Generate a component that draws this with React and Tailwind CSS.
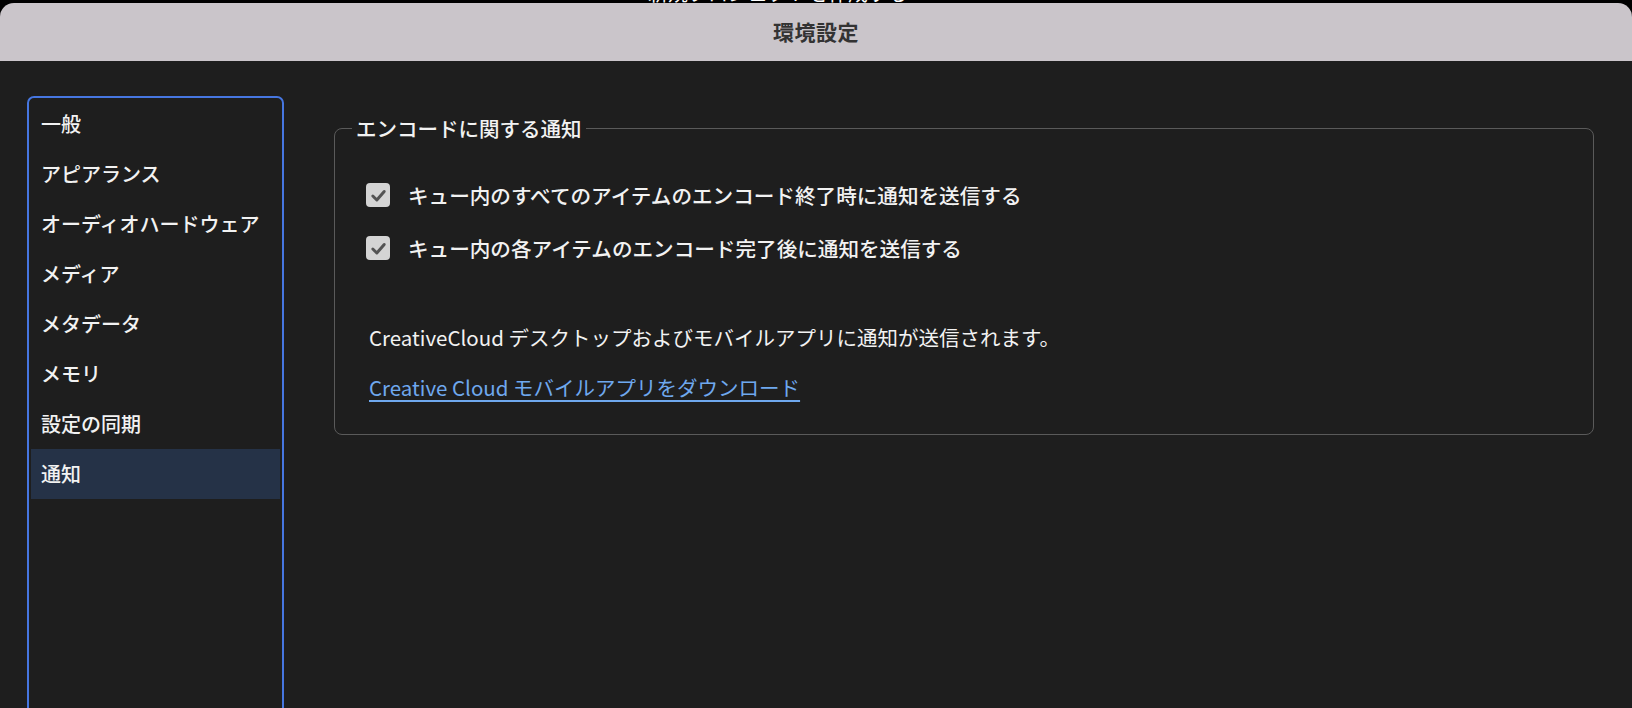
import React from "react";

const FONT = {
  fontFamily: '"Noto Sans CJK JP", "Noto Sans", sans-serif',
};

const SECTIONS = [
  "一般",
  "アピアランス",
  "オーディオハードウェア",
  "メディア",
  "メタデータ",
  "メモリ",
  "設定の同期",
  "通知",
];

function Checkbox() {
  return (
    <div className="w-[24px] h-[24px] rounded-[4px] bg-[#d4d4d4] flex items-center justify-center shrink-0">
      <svg width="19" height="19" viewBox="0 0 16 16" fill="none">
        <path
          d="M3.2 8.4 L6.6 11.8 L12.8 4.6"
          stroke="#535353"
          strokeWidth="2.5"
          strokeLinecap="round"
          strokeLinejoin="round"
        />
      </svg>
    </div>
  );
}

export default function App() {
  const selected = "通知";

  return (
    <div
      className="w-[1632px] h-[708px] bg-black overflow-hidden flex flex-col"
      style={FONT}
    >
      {/* window behind, only its title shows */}
      <div className="h-[3px] overflow-hidden pl-[648px] shrink-0">
        <div className="text-white text-[20px] leading-[20px] -mt-[17px]">
          新規プロジェクトを作成する
        </div>
      </div>

      {/* title bar */}
      <div className="h-[58px] shrink-0 bg-[#cac5ca] rounded-t-[14px] flex items-center justify-center">
        <span className="text-[21px] font-semibold text-[#333] tracking-[0.5px]">
          環境設定
        </span>
      </div>

      {/* body */}
      <div className="flex-1 bg-[#1e1e1e] flex pl-[27px] pr-[38px] pt-[35px] gap-[50px]">
        <div className="w-[257px] h-[640px] shrink-0 border-2 border-[#4676e0] rounded-[7px] pt-[1px] px-[2px]">
          {SECTIONS.map((s) => (
            <div
              key={s}
              className={
                "h-[50px] flex items-center pl-[10px] text-[20px] font-medium text-[#f2f2f2] " +
                (s === selected ? "bg-[#253247]" : "")
              }
            >
              {s}
            </div>
          ))}
        </div>

        <fieldset className="flex-1 self-start mt-[18px] border border-[#5a5a5a] rounded-[8px] px-[31px] pb-[32px]">
          <legend className="ml-[-14px] px-[4px] text-[20.5px] font-medium leading-[28px] text-[#f2f2f2]">
            エンコードに関する通知
          </legend>

          <div className="pt-[38px]">
            <div className="h-[30px] flex items-center gap-[18px]">
              <Checkbox />
              <span className="text-[20.6px] font-medium text-[#f2f2f2]">
                キュー内のすべてのアイテムのエンコード終了時に通知を送信する
              </span>
            </div>
            <div className="h-[30px] mt-[23px] flex items-center gap-[18px]">
              <Checkbox />
              <span className="text-[20.6px] font-medium text-[#f2f2f2]">
                キュー内の各アイテムのエンコード完了後に通知を送信する
              </span>
            </div>

            <div className="mt-[59px] h-[30px] leading-[30px] pl-[3px] text-[20.5px] text-[#f2f2f2]">
              CreativeCloud デスクトップおよびモバイルアプリに通知が送信されます。
            </div>
            <div className="mt-[20px] h-[30px] leading-[30px] pl-[3px]">
              <a
                href="#"
                className="text-[20.5px] text-[#6fa8ee] underline underline-offset-[4px]"
              >
                Creative Cloud モバイルアプリをダウンロード
              </a>
            </div>
          </div>
        </fieldset>
      </div>
    </div>
  );
}
